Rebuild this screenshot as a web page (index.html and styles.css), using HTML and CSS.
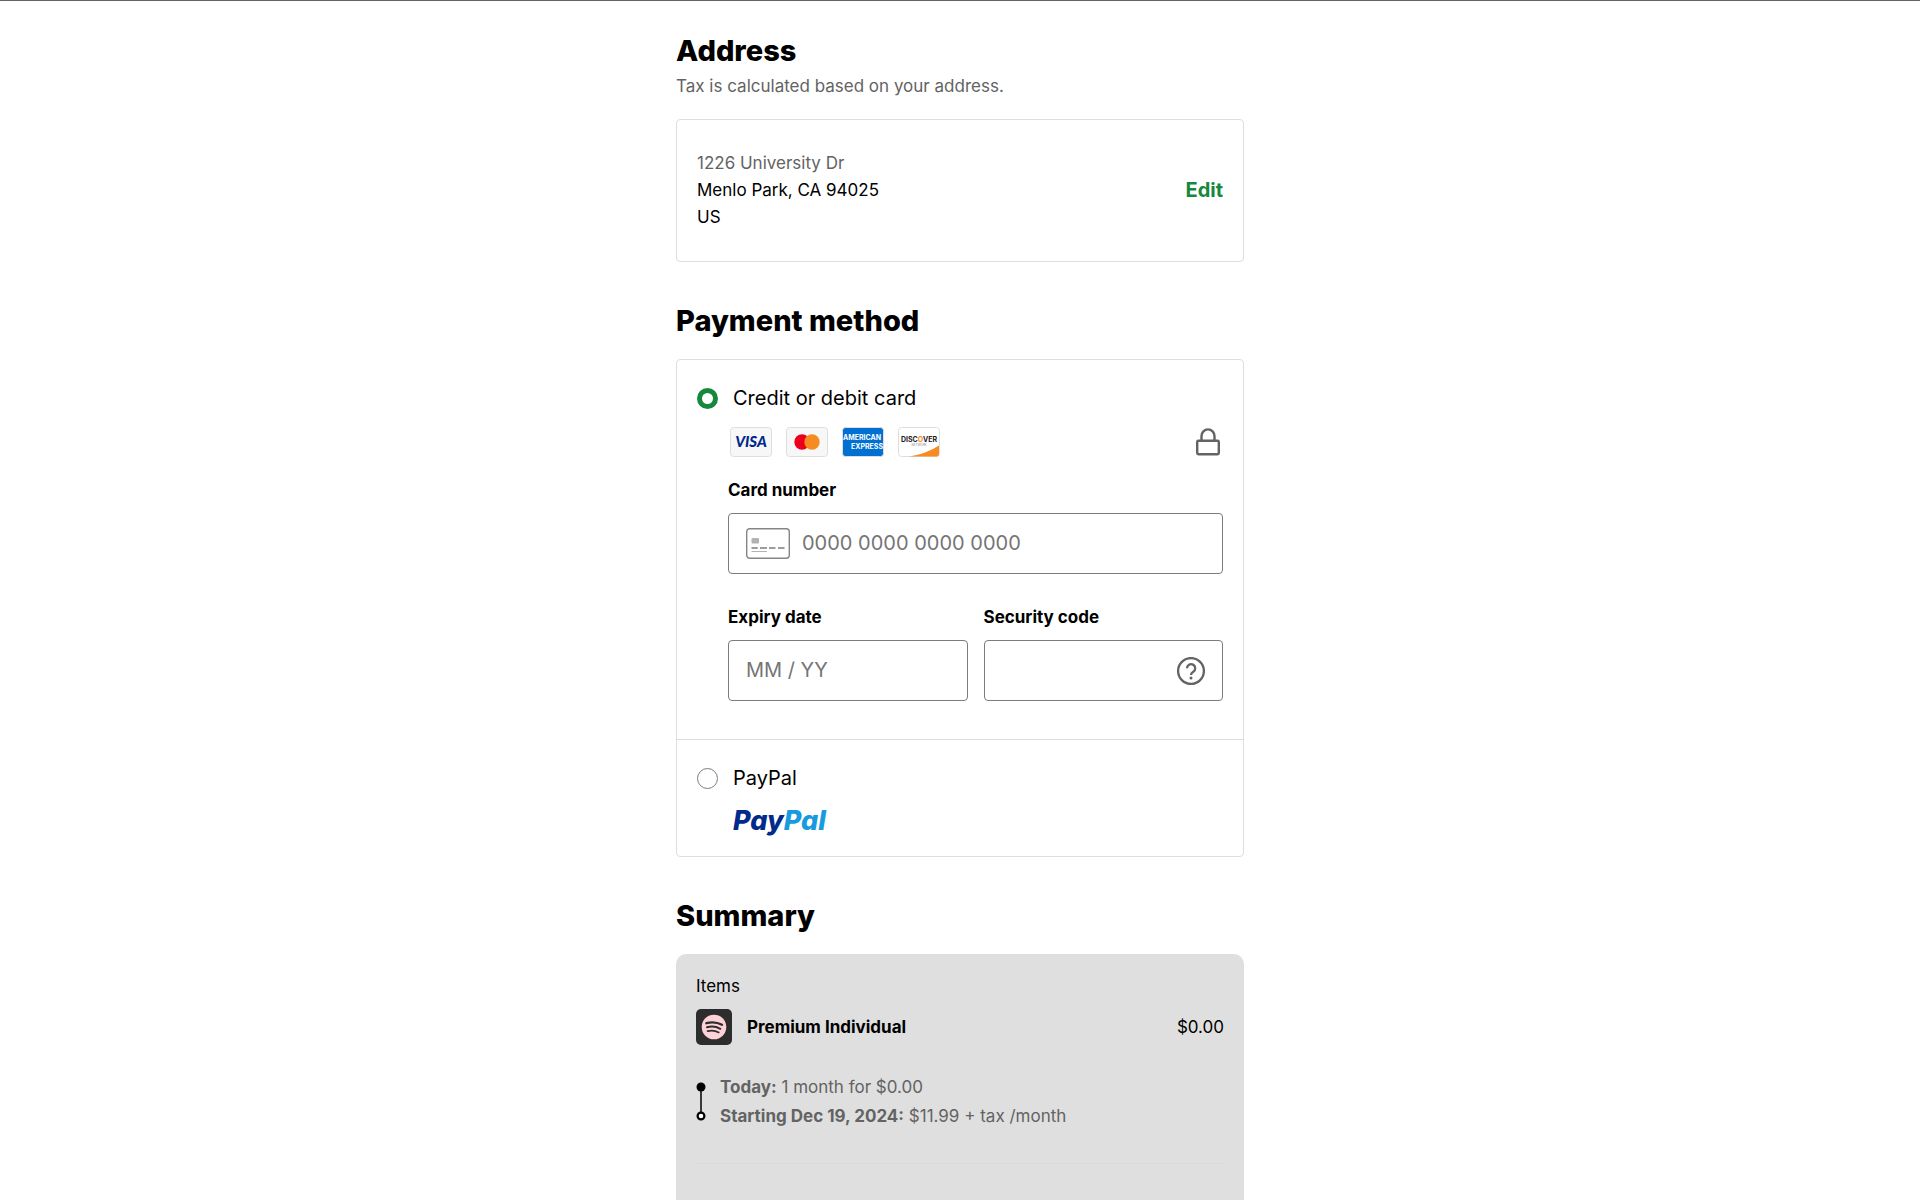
FILE: index.html
```html
<!DOCTYPE html>
<html lang="en">
<head>
    <meta charset="UTF-8">
    <meta name="viewport" content="width=device-width, initial-scale=1">
    <title>Checkout</title>
    <link rel="stylesheet" href="styles.css">
</head>
<body>
<main class="checkout">

    <!-- address -->
    <section class="section">
        <h2>Address</h2>
        <p class="hint">Tax is calculated based on your address.</p>
        <div class="card address">
            <address>
                <span class="muted">1226 University Dr</span>
                <span>Menlo Park, CA 94025</span>
                <span>US</span>
            </address>
            <a class="edit" href="#">Edit</a>
        </div>
    </section>

    <!-- payment -->
    <section class="section">
        <h2>Payment method</h2>
        <form class="card">
            <div class="method">
                <div class="option">
                    <input type="radio" name="method" id="method-card" checked>
                    <label for="method-card">Credit or debit card</label>
                </div>
                <div class="brands">
                    <svg class="brand" viewBox="0 0 42 30" role="img" aria-label="Visa">
                        <rect x="0.5" y="0.5" width="41" height="29" rx="3" fill="#f7f7f7" stroke="#dedede"/>
                        <text class="visa" x="21" y="20" text-anchor="middle">VISA</text>
                    </svg>
                    <svg class="brand" viewBox="0 0 42 30" role="img" aria-label="Mastercard">
                        <rect x="0.5" y="0.5" width="41" height="29" rx="3" fill="#f7f7f7" stroke="#dedede"/>
                        <circle cx="16" cy="15" r="7.7" fill="#eb001b"/>
                        <circle cx="26" cy="15" r="7.7" fill="#f68b1f"/>
                    </svg>
                    <svg class="brand" viewBox="0 0 42 30" role="img" aria-label="American Express">
                        <rect x="0.5" y="0.5" width="41" height="29" rx="3" fill="#0070d2" stroke="#dedede"/>
                        <text class="amex" x="1" y="13">AMERICAN</text>
                        <text class="amex" x="41" y="22" text-anchor="end">EXPRESS</text>
                    </svg>
                    <svg class="brand" viewBox="0 0 42 30" role="img" aria-label="Discover">
                        <rect x="0.5" y="0.5" width="41" height="29" rx="3" fill="#fff" stroke="#dedede"/>
                        <path d="M11 29.5Q28 27 41 18.500V27Q41 29.500 38.500 29.500Z" fill="#f68b1f"/>
                        <text class="discover" x="21" y="15" text-anchor="middle">DISC<tspan fill="#f68b1f">O</tspan>VER</text>
                        <text class="network" x="21" y="19" text-anchor="middle">NETWORK</text>
                    </svg>
                    <svg class="lock" viewBox="0 0 24 28" aria-hidden="true">
                        <rect x="1.200" y="12.800" width="21.600" height="13.500" rx="1.200"/>
                        <path d="M5.500 12.500V8.200a6.500 6.800 0 0 1 13 0v4.300"/>
                    </svg>
                </div>
                <div class="fields">
                    <div class="field wide">
                        <label for="number">Card number</label>
                        <div class="control">
                            <svg class="card-icon" viewBox="0 0 44 31" aria-hidden="true">
                                <rect x="0.7" y="0.7" width="42.600" height="29.600" rx="3" fill="#fff" stroke="#858585" stroke-width="1.400"/>
                                <rect x="5.500" y="10" width="7.500" height="5.500" rx="1" fill="#b3b3b3"/>
                                <path d="M5.500 20h6.200M14 20h7M23 20h6.500M32 20h6.500" stroke="#7c7c7c" stroke-width="1.700"/>
                                <path d="M5.500 23.500h15.500" stroke="#b3b3b3"/>
                            </svg>
                            <input type="text" id="number" placeholder="0000 0000 0000 0000">
                        </div>
                    </div>
                    <div class="field">
                        <label for="expiry">Expiry date</label>
                        <div class="control">
                            <input type="text" id="expiry" placeholder="MM / YY">
                        </div>
                    </div>
                    <div class="field">
                        <label for="code">Security code</label>
                        <div class="control">
                            <input type="text" id="code">
                            <button class="help" type="button" aria-label="What is a security code?">
                                <svg viewBox="0 0 28 28" aria-hidden="true">
                                    <circle cx="14" cy="14" r="12.900"/>
                                    <path d="M10 11.300a4.100 4.100 0 1 1 6.300 3.400c-1.500.9-2.300 1.400-2.300 3.300"/>
                                    <circle class="dot" cx="14" cy="21" r="1.500"/>
                                </svg>
                            </button>
                        </div>
                    </div>
                </div>
            </div>
            <div class="method">
                <div class="option">
                    <input type="radio" name="method" id="method-paypal">
                    <label for="method-paypal">PayPal</label>
                </div>
                <div class="paypal"><span>Pay</span>Pal</div>
            </div>
        </form>
    </section>

    <!-- summary -->
    <section class="section summary">
        <h2>Summary</h2>
        <div class="summary-box">
            <p>Items</p>
            <div class="item">
                <svg class="item-icon" viewBox="0 0 36 36" aria-hidden="true">
                    <rect width="36" height="36" rx="5" fill="#2d2d2d"/>
                    <circle cx="18" cy="18" r="12.300" fill="#ffd2d7"/>
                    <path d="M10.400 14.200c5.400-1.500 10.800-1 15.600 1.600" stroke-width="2.400"/>
                    <path d="M11 18.300c4.700-1.300 9.200-.8 13.300 1.500" stroke-width="2"/>
                    <path d="M11.600 22.100c4-1 7.700-.6 11.200 1.300" stroke-width="1.700"/>
                </svg>
                <strong>Premium Individual</strong>
                <span class="price">$0.00</span>
            </div>
            <div class="timeline">
                <svg viewBox="0 0 10 40" aria-hidden="true">
                    <path d="M5 5v25" stroke="#000" stroke-width="1.500"/>
                    <circle cx="5" cy="5" r="4.500"/>
                    <circle cx="5" cy="34" r="3.400" fill="#fff" stroke="#000" stroke-width="2.200"/>
                </svg>
                <ul>
                    <li><b>Today:</b> 1 month for $0.00</li>
                    <li><b>Starting Dec 19, 2024:</b> $11.99 + tax /month</li>
                </ul>
            </div>
            <hr>
        </div>
    </section>

</main>
</body>
</html>
```
FILE: styles.css
```css
*{
    box-sizing: border-box;
    margin: 0;
    padding: 0;
}
body{
    border-top: 1px solid #636363;
    background: #fff;
    color: #000;
    font-family: Inter, "Liberation Sans", sans-serif;
    font-size: 17px;
    line-height: 27px;
}
.checkout{
    display: flex;
    flex-direction: column;
    max-width: 568px;
    min-height: calc(100vh - 1px);
    margin: 0 auto;
    padding-top: 30px;
}
h2{
    font-size: 29px;
    line-height: 40px;
    font-weight: 800;
}
.section{
    margin-bottom: 39px;
}
.card{
    margin-top: 18px;
    border: 1px solid #dedede;
    border-radius: 4px;
}

/* address */
.hint,
.muted{
    color: #636363;
}
.hint{
    line-height: 30px;
}
.address{
    display: flex;
    align-items: center;
    justify-content: space-between;
    padding: 30px 20px;
}
.address address span{
    display: block;
}
address{
    font-style: normal;
}
.edit{
    color: #15883e;
    font-size: 20px;
    font-weight: 700;
    text-decoration: none;
}

/* payment */
.method{
    padding: 24px 20px 20px;
}
.method + .method{
    border-top: 1px solid #dedede;
}
.option{
    display: flex;
    align-items: center;
    gap: 15px;
    font-size: 20px;
    line-height: 28px;
}
.option input{
    appearance: none;
    width: 21px;
    height: 21px;
    border: 1px solid #7c7c7c;
    border-radius: 50%;
    background: #fff;
}
.option input:checked{
    border: 5px solid #15883e;
}
.brands{
    display: flex;
    align-items: center;
    gap: 14px;
    margin: 15px 3px 0 33px;
}
.brand{
    width: 42px;
    height: 30px;
}
.visa{
    fill: #00278c;
    font: italic 900 15px Lato, sans-serif;
}
.amex{
    fill: #fff;
    font: 700 7px Inter, sans-serif;
}
.discover{
    fill: #222;
    font: 700 7px Inter, sans-serif;
}
.network{
    fill: #888;
    font: 3px Inter, sans-serif;
}
.lock{
    width: 24px;
    height: 28px;
    margin-left: auto;
    fill: none;
    stroke: #636363;
    stroke-width: 2.4;
}
.fields{
    display: grid;
    grid-template-columns: repeat(2, minmax(0, 1fr));
    gap: 30px 16px;
    margin: 20px 0 18px 31px;
}
.wide{
    grid-column: 1 / -1;
}
.field label{
    display: block;
    margin-bottom: 9px;
    font-weight: 700;
}
.control{
    display: flex;
    align-items: center;
    gap: 12px;
    height: 61px;
    padding: 0 17px;
    border: 1px solid #7c7c7c;
    border-radius: 4px;
}
.control input{
    flex: 1;
    min-width: 0;
    border: 0;
    outline: 0;
    background: none;
    color: #000;
    font: inherit;
    font-size: 20px;
}
.control input::placeholder{
    color: #757575;
    opacity: 1;
}
.card-icon{
    flex: none;
    width: 44px;
    height: 31px;
}
.help{
    flex: none;
    width: 28px;
    height: 28px;
    border: 0;
    background: none;
    cursor: pointer;
}
.help svg{
    display: block;
    width: 28px;
    height: 28px;
    fill: none;
    stroke: #636363;
    stroke-width: 2.3;
}
.help .dot{
    fill: #636363;
    stroke: none;
}
.paypal{
    margin: 14px 0 0 36px;
    color: #179bde;
    font: italic 800 27px/30px Inter, sans-serif;
}
.paypal span{
    color: #002a8c;
}

/* summary */
.summary{
    display: flex;
    flex: 1;
    flex-direction: column;
    margin-bottom: 0;
}
.summary-box{
    flex: 1;
    margin-top: 18px;
    padding: 19px 20px;
    border-radius: 10px 10px 0 0;
    background: #dfdfdf;
}
.item{
    display: flex;
    align-items: center;
    gap: 15px;
    margin-top: 9px;
}
.item-icon{
    width: 36px;
    height: 36px;
    fill: none;
    stroke: #2d2d2d;
    stroke-linecap: round;
}
.item-icon rect,
.item-icon circle{
    stroke: none;
}
.price{
    margin-left: auto;
}
.timeline{
    display: flex;
    align-items: center;
    gap: 14px;
    margin: 28px 0 32px;
    color: #636363;
}
.timeline svg{
    width: 10px;
    height: 40px;
}
.timeline ul{
    list-style: none;
}
.timeline li{
    line-height: 29px;
}
.summary-box hr{
    border: 0;
    border-top: 1px solid #dadada;
}
```
